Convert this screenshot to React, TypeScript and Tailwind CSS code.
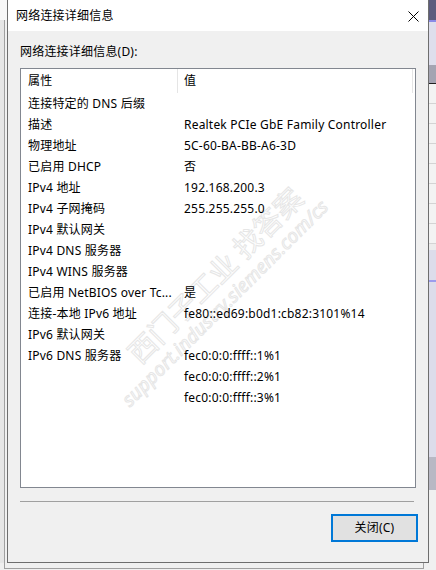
import React from 'react';

const rows: [string, string][] = [
  ['连接特定的 DNS 后缀', ''],
  ['描述', 'Realtek PCIe GbE Family Controller'],
  ['物理地址', '5C-60-BA-BB-A6-3D'],
  ['已启用 DHCP', '否'],
  ['IPv4 地址', '192.168.200.3'],
  ['IPv4 子网掩码', '255.255.255.0'],
  ['IPv4 默认网关', ''],
  ['IPv4 DNS 服务器', ''],
  ['IPv4 WINS 服务器', ''],
  ['已启用 NetBIOS over Tc...', '是'],
  ['连接-本地 IPv6 地址', 'fe80::ed69:b0d1:cb82:3101%14'],
  ['IPv6 默认网关', ''],
  ['IPv6 DNS 服务器', 'fec0:0:0:ffff::1%1'],
  ['', 'fec0:0:0:ffff::2%1'],
  ['', 'fec0:0:0:ffff::3%1'],
];

export default function App() {
  return (
    <div className="w-[436px] h-[570px] overflow-hidden bg-[#f0f0f0] text-[12px] tracking-[0.2px] text-black font-['Noto_Sans','Noto_Sans_CJK_SC',sans-serif] flex flex-col">
      <div className="flex h-[563px]">
        {/* left edge of window behind */}
        <div className="w-[7px] flex flex-col">
          <div className="h-[20px] bg-[#f7f7f7]" />
          <div className="flex-1 flex bg-[#e6e6e6]">
            <div className="w-[4px]" />
            <div className="w-[1px] bg-[#a0a0a0]" />
            <div className="flex-1 bg-[#f0f0f0]" />
          </div>
        </div>

        {/* dialog */}
        <div className="w-[422px] border-x border-b border-[#6e6e6e] flex flex-col bg-[#f0f0f0]">
          <div className="h-[31px] bg-white flex items-center justify-between pl-[8px] pr-[9px]">
            <span className="leading-[16px]">网络连接详细信息</span>
            <svg width="11" height="11" viewBox="0 0 11 11" className="mt-[1px]">
              <path d="M0.5 0.5L10.5 10.5M10.5 0.5L0.5 10.5" stroke="#000" strokeWidth="1" />
            </svg>
          </div>

          <div className="mt-[13px] ml-[12px] h-[16px] leading-[16px]">网络连接详细信息(D):</div>

          <div className="relative mt-[8px] ml-[12px] w-[396px] h-[420px] border border-[#828790] bg-white overflow-hidden">
            {/* watermark */}
            <div className="absolute left-[194px] top-[206px] -translate-x-1/2 -translate-y-1/2 rotate-[-45deg] whitespace-nowrap text-[28px] text-transparent [-webkit-text-stroke:1px_#e6e6e6]">
              西门子工业 找答案
            </div>
            <div className="absolute left-[204px] top-[234px] -translate-x-1/2 -translate-y-1/2 rotate-[-45deg] whitespace-nowrap text-[19px] italic text-transparent [-webkit-text-stroke:1px_#e6e6e6]">
              support.industry.siemens.com/cs
            </div>

            <div className="relative flex h-[24px] items-center">
              <div className="w-[157px] h-full flex items-center pl-[7px] border-r border-[#e5e5e5]">属性</div>
              <div className="w-[235px] h-full flex items-center pl-[6px] border-r border-[#e5e5e5]">值</div>
            </div>
            {rows.map(([k, v], i) => (
              <div key={i} className="relative flex h-[21px] items-center whitespace-nowrap">
                <div className="w-[157px] pl-[7px]">{k}</div>
                <div className="pl-[6px]">{v}</div>
              </div>
            ))}
          </div>

          <div className="mt-[13px] ml-[12px] w-[394px] h-[1px] bg-[#a0a0a0]" />

          <div className="mt-[12px] flex justify-end pr-[10px]">
            <button className="w-[87px] h-[28px] border-2 border-[#0078d7] bg-[#e1e1e1] flex items-center justify-center">
              关闭(C)
            </button>
          </div>
        </div>

        {/* right edge: window behind */}
        <div className="w-[7px] flex flex-col">
          <div className="h-[20px] bg-[#5c5c7e]" />
          <div className="h-[2px] bg-[#8a8ae6]" />
          <div className="h-[43px] bg-[#dedeec]" />
          <div className="h-[18px] bg-[#a4a4b2]" />
          <div className="h-[1px] bg-[#222]" />
          {Array.from({ length: 8 }).map((_, i) => (
            <div key={i} className="h-[20px] bg-[#f3f3f3] border-b border-[#d4d4d4]" />
          ))}
          <div className="h-[6px] bg-[#ececec]" />
          <div className="h-[30px] bg-[#dcdcea]" />
          <div className="h-[2px] bg-[#9c9cec]" />
          <div className="h-[175px] bg-[#dcdcea]" />
          <div className="h-[33px] bg-[#b8b8c4]" />
          <div className="flex-1 bg-[#f0f0f0]" />
        </div>
      </div>

      {/* bottom of window behind */}
      <div className="h-[7px] flex">
        <div className="ml-[4px] w-[420px] h-[6px] border-x border-b border-[#a0a0a0]" />
      </div>
    </div>
  );
}
